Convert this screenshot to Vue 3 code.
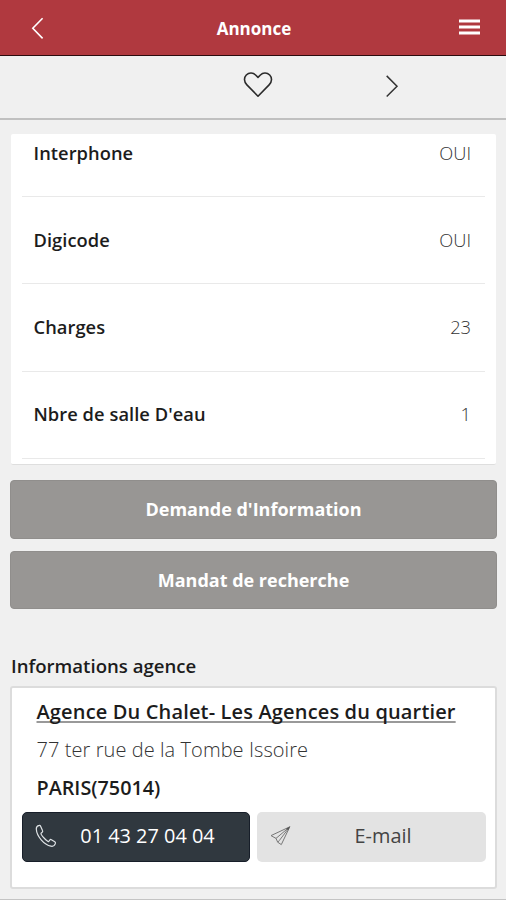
<template>
  <div class="page">
    <header class="header">
      <button class="icon-btn back" aria-label="Retour">
        <svg width="14" height="24" viewBox="0 0 14 24">
          <path d="M12.6 2.2L2.8 12.3L12.6 22.4" fill="none" stroke="#fff" stroke-width="1.6" />
        </svg>
      </button>
      <h1 class="title">Annonce</h1>
      <button class="icon-btn menu" aria-label="Menu">
        <svg width="21" height="18" viewBox="0 0 21 18">
          <path d="M0 2H21M0 8H21M0 14H21" stroke="#fff" stroke-width="3" />
        </svg>
      </button>
    </header>

    <nav class="toolbar">
      <span></span>
      <button class="icon-btn" aria-label="Favori">
        <svg class="heart" width="30" height="28" viewBox="0 0 30 28">
          <path d="M15 25.2L3.9 13.9C.8 10.7.8 6.6 3.3 4C6.2 1.1 10.2 1.6 12.6 4L15 6.4L17.4 4C19.8 1.6 23.8 1.1 26.7 4C29.2 6.6 29.2 10.7 26.1 13.9Z" fill="none" stroke="#2b2b2b" stroke-width="1.6" stroke-linejoin="round" />
        </svg>
      </button>
      <button class="icon-btn next" aria-label="Suivant">
        <svg width="14" height="24" viewBox="0 0 14 24">
          <path d="M1.7 1.9L12 12.2L1.7 22.5" fill="none" stroke="#333" stroke-width="1.5" />
        </svg>
      </button>
    </nav>

    <main class="content">
      <section class="details">
        <ul class="rows">
          <li v-for="row in rows" :key="row.label" class="row">
            <span class="label">{{ row.label }}</span>
            <span class="value">{{ row.value }}</span>
          </li>
        </ul>
      </section>

      <div class="actions">
        <button v-for="action in actions" :key="action" class="action">{{ action }}</button>
      </div>

      <h2 class="heading">Informations agence</h2>
      <section class="agency">
        <a class="agency-name">{{ agency.name }}</a>
        <p class="address">{{ agency.address }}</p>
        <p class="city">{{ agency.city }}</p>
        <div class="contacts">
          <button class="contact phone">
            <svg width="22" height="24" viewBox="0 0 22 24">
              <path d="M4.2 1.4C2.4 1.8 1.2 3.2 1.3 5C1.7 12.4 9 20.7 16 22.2C17.9 22.6 19.7 21.4 20.4 19.4C20.6 18.7 20.4 18.2 19.8 17.8L16.4 15.7C15.7 15.3 15.1 15.5 14.7 16.1L13.7 17.5C12.9 18.4 5.3 10.6 6 9.2L7.2 8.2C7.8 7.7 7.9 7.2 7.5 6.5L5.6 2.2C5.3 1.5 4.9 1.2 4.2 1.4Z" fill="none" stroke="#dfe3e6" stroke-width="1.2" stroke-linejoin="round" />
            </svg>
            <span>{{ agency.phone }}</span>
          </button>
          <button class="contact email">
            <svg width="22" height="22" viewBox="0 0 22 22">
              <path d="M20.8 1.8L2 10.6L7 13.4L8.7 17.2L12.3 19.6L20.8 1.8L7 13.4M20.8 1.8L10.4 15.4L8.7 17.2" fill="none" stroke="#777" stroke-width="1" stroke-linejoin="round" />
              <path d="M20.8 1.8L17.2 3.5L19.2 5.3Z" fill="#555" />
            </svg>
            <span>E-mail</span>
          </button>
        </div>
      </section>
    </main>
  </div>
</template>

<script setup>
const rows = [
  { label: 'Interphone', value: 'OUI' },
  { label: 'Digicode', value: 'OUI' },
  { label: 'Charges', value: '23' },
  { label: "Nbre de salle D'eau", value: '1' }
]

const actions = ["Demande d'Information", 'Mandat de recherche']

const agency = {
  name: 'Agence Du Chalet- Les Agences du quartier',
  address: '77 ter rue de la Tombe Issoire',
  city: 'PARIS(75014)',
  phone: '01 43 27 04 04'
}
</script>

<style>
body {
  margin: 0;
  background: #f0f0f0;
}
</style>

<style scoped>
.page {
  box-sizing: border-box;
  height: 900px;
  overflow: hidden;
  background: #f0f0f0;
  border-bottom: 1px solid #c4c4c4;
  color: #1c1c1c;
  font-family: "Open Sans", sans-serif;
  font-size: 18px;
}

button {
  font-family: inherit;
  border: none;
  cursor: pointer;
}

svg {
  display: block;
  flex-shrink: 0;
}

.icon-btn {
  padding: 0;
  background: none;
}

.header {
  box-sizing: border-box;
  display: grid;
  grid-template-columns: 1fr auto 1fr;
  align-items: center;
  height: 56px;
  padding: 0 26px 0 30px;
  background: #b0393f;
  border-bottom: 1px solid #2c0b0e;
}

.title {
  margin: 0 2px 0 0;
  padding-top: 2px;
  color: #fff;
  font-size: 17px;
  font-weight: 700;
  line-height: 24px;
}

.back {
  justify-self: start;
}

.menu {
  justify-self: end;
}

.toolbar {
  box-sizing: border-box;
  display: grid;
  grid-template-columns: 243px 30px 1fr;
  align-items: start;
  height: 64px;
  padding-top: 15px;
  border-bottom: 2px solid #c0c0c0;
}

.next {
  justify-self: start;
  margin: 3px 0 0 112px;
}

.content {
  padding: 14px 9px 0 10px;
}

.details {
  height: 330px;
  margin: 0 1px;
  overflow: hidden;
  background: #fff;
  border-bottom: 1px solid #dedede;
  border-radius: 2px;
}

/* first row stays partly scrolled out of the panel */
.rows {
  margin: -24px 11px 0;
  padding: 0;
  list-style: none;
}

.row {
  box-sizing: border-box;
  display: flex;
  align-items: center;
  justify-content: space-between;
  height: 87.2px;
  padding: 0 14px 2px 11.5px;
  border-bottom: 1px solid #e9e9e9;
}

.label {
  font-size: 18.3px;
  font-weight: 600;
  letter-spacing: 0.05px;
}

.value {
  color: #333;
  font-size: 18.3px;
  font-weight: 300;
}

.actions {
  display: flex;
  flex-direction: column;
  gap: 12px;
  margin-top: 15px;
}

.action {
  height: 58.5px;
  padding: 0;
  color: #fff;
  font-size: 18px;
  font-weight: 700;
  background: #989694;
  border: 1px solid #908e8c;
  border-radius: 4px;
}

.heading {
  margin: 44px 0 8px 1px;
  font-size: 18.6px;
  font-weight: 600;
  line-height: 25px;
}

.agency {
  box-sizing: border-box;
  height: 203px;
  padding: 10px 9px 0 10px;
  background: #fff;
  border: 2px solid #dcdcdc;
  border-radius: 3px;
}

.agency-name {
  display: block;
  margin-left: 14.5px;
  font-size: 20px;
  font-weight: 600;
  letter-spacing: 0.15px;
  line-height: 28px;
  text-decoration: underline #999 2px;
  text-underline-offset: 2px;
  text-decoration-skip-ink: none;
  white-space: nowrap;
}

.address,
.city {
  margin: 10px 0 0 14.5px;
  line-height: 28px;
}

.address {
  color: #333;
  font-size: 20px;
  font-weight: 300;
  letter-spacing: 0.07px;
}

.city {
  font-size: 19.8px;
  font-weight: 600;
}

.contacts {
  display: grid;
  grid-template-columns: 228px 229px;
  gap: 7px;
  margin-top: 10px;
}

.contact {
  display: grid;
  grid-template-columns: 22px 1fr;
  align-items: center;
  height: 50px;
  padding: 0 11px 3px 12px;
  font-size: 19.9px;
  border-radius: 5px;
}

.phone {
  color: #fff;
  background: #30383f;
  border: 1px solid #171e29;
}

.email {
  color: #444;
  background: #e3e3e3;
}
</style>
